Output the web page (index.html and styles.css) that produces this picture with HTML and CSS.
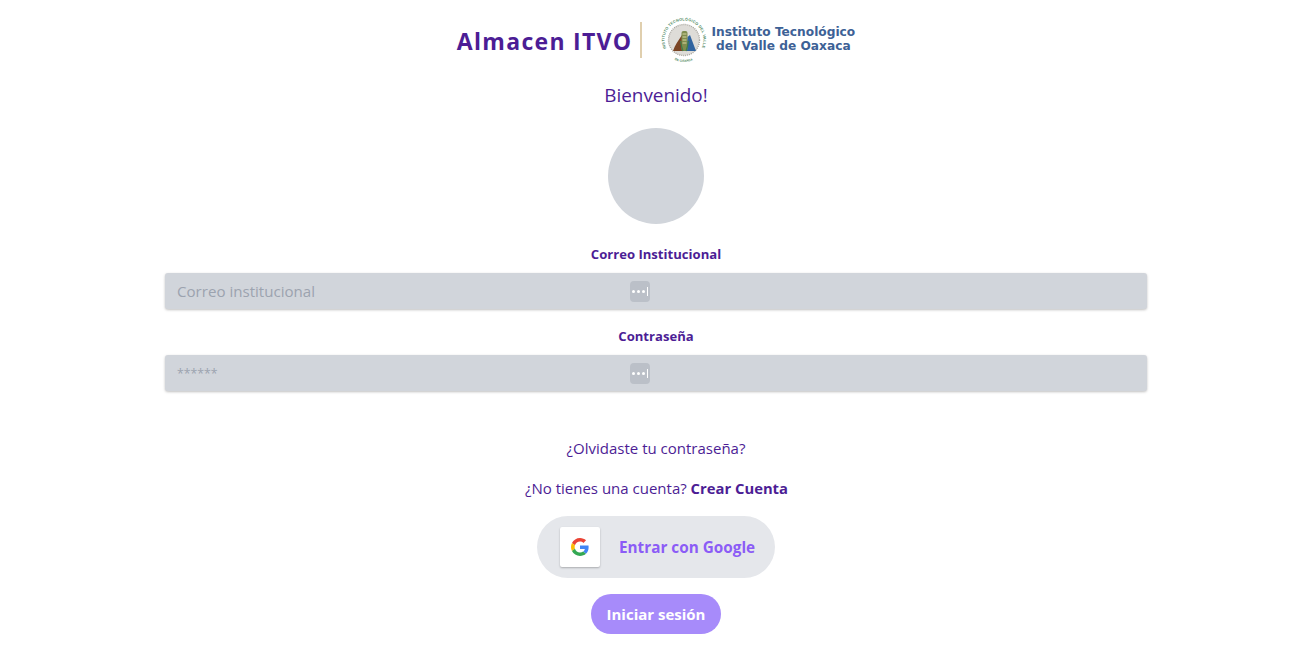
FILE: index.html
```html
<!DOCTYPE html>
<html lang="es">
<head>
<meta charset="utf-8">
<title>Almacen ITVO</title>
<link rel="stylesheet" href="styles.css">
</head>
<body>
<main class="page">
  <header class="brand">
    <h1 class="brand-title">Almacen ITVO</h1>
    <span class="brand-divider"></span>
    <svg class="crest" width="48" height="48" viewBox="0 0 48 48" aria-hidden="true">
      <defs>
        <path id="crest-top" d="M6.3 32.2 A19.5 19.5 0 1 1 41.7 32.2"/>
        <path id="crest-bottom" d="M14.5 43.8 A22 22 0 0 0 33.5 43.8"/>
      </defs>
      <circle cx="24" cy="24" r="23.5" fill="#fff"/>
      <circle cx="24" cy="24" r="15.5" fill="#dedcd8" stroke="#a9a69f" stroke-width="1.4" stroke-dasharray="1 1"/>
      <text class="crest-text"><textPath href="#crest-top" textLength="77">INSTITUTO TECNOLÓGICO DEL VALLE</textPath></text>
      <text class="crest-text crest-text-small"><textPath href="#crest-bottom" textLength="19">DE OAXACA</textPath></text>
      <path d="M13 35 C15 29 18 25 22 19 L23.5 35 Z" fill="#7a4424"/>
      <path d="M26 35 L27.5 21 L30 19 L36 35 Z" fill="#2f639f"/>
      <rect x="21.5" y="15" width="6" height="20" rx="2" fill="#7f8c4e"/>
      <path d="M22.5 18 H26.5 M22.5 21 H26.5 M22.5 24 H26.5 M22.5 27 H26.5" stroke="#d9d6a0" stroke-width="1"/>
      <path d="M23 35 C21.5 31 21 28 20.5 25 M26 35 C27.5 31 28 28 28.5 25" stroke="#3f7d49" stroke-width="1.2" fill="none"/>
    </svg>
    <p class="brand-school">Instituto Tecnológico<br>del Valle de Oaxaca</p>
  </header>

  <h2 class="welcome">Bienvenido!</h2>
  <div class="avatar"></div>

  <form class="login">
    <label class="field-label" for="correo">Correo Institucional</label>
    <div class="field">
      <input class="field-input" id="correo" type="text" placeholder="Correo institucional">
      <span class="key-icon"><i></i><i></i><i></i><b></b></span>
    </div>
    <label class="field-label" for="clave">Contraseña</label>
    <div class="field">
      <input class="field-input field-pass" id="clave" type="text" placeholder="******">
      <span class="key-icon"><i></i><i></i><i></i><b></b></span>
    </div>
  </form>

  <p class="forgot">¿Olvidaste tu contraseña?</p>
  <p class="signup">¿No tienes una cuenta? <strong>Crear Cuenta</strong></p>

  <button class="google" type="button">
    <span class="google-tile">
      <svg width="18" height="18" viewBox="0 0 48 48" aria-hidden="true">
        <path fill="#EA4335" d="M24 9.5c3.54 0 6.71 1.22 9.21 3.6l6.85-6.85C35.9 2.38 30.47 0 24 0 14.62 0 6.51 5.38 2.56 13.22l7.98 6.19C12.43 13.72 17.74 9.5 24 9.5z"/>
        <path fill="#4285F4" d="M46.98 24.55c0-1.57-.15-3.09-.38-4.55H24v9.02h12.94c-.58 2.96-2.26 5.48-4.78 7.18l7.73 6c4.51-4.18 7.09-10.36 7.09-17.65z"/>
        <path fill="#FBBC05" d="M10.53 28.59c-.48-1.45-.76-2.99-.76-4.59s.27-3.14.76-4.59l-7.98-6.19C.92 16.46 0 20.12 0 24c0 3.88.92 7.54 2.56 10.78l7.97-6.19z"/>
        <path fill="#34A853" d="M24 48c6.48 0 11.93-2.13 15.89-5.81l-7.73-6c-2.15 1.45-4.92 2.3-8.16 2.3-6.26 0-11.57-4.22-13.47-9.91l-7.98 6.19C6.51 42.62 14.62 48 24 48z"/>
      </svg>
    </span>
    <span class="google-text">Entrar con Google</span>
  </button>

  <button class="submit" type="button">Iniciar sesión</button>
</main>
</body>
</html>
```

FILE: styles.css
```css
* { box-sizing: border-box; }
html, body { margin: 0; padding: 0; }
body {
  background: #fff;
  color: #4c1d95;
  font-family: "Open Sans", "Noto Sans", sans-serif;
}
.page {
  display: flex;
  flex-direction: column;
  align-items: center;
  width: 100%;
  height: 666px;
  overflow: hidden;
  padding: 16px 0 0 15px;
}
.brand {
  display: flex;
  align-items: center;
  height: 48px;
}
.brand-title {
  margin: 2px 8px 0 0;
  font-size: 23px;
  line-height: 32px;
  font-weight: 700;
  letter-spacing: 1.3px;
  color: #4c1d95;
}
.brand-divider {
  width: 2px;
  height: 36px;
  background: #e0cfae;
  margin-right: 18px;
}
.crest { display: block; flex: none; }
.crest-text {
  font-family: "Liberation Sans", sans-serif;
  font-size: 3.8px;
  font-weight: 700;
  fill: #4f8a63;
}
.crest-text-small { font-size: 3.2px; }
.brand-school {
  margin: -2px 0 0 3px;
  font-family: "DejaVu Sans", sans-serif;
  font-size: 12.2px;
  line-height: 14px;
  font-weight: 700;
  text-align: center;
  color: #3d6196;
}
.welcome {
  margin: 17px 0 0;
  font-size: 18.9px;
  line-height: 28px;
  font-weight: 400;
  color: #4c1d95;
}
.avatar {
  width: 96px;
  height: 96px;
  border-radius: 50%;
  background: #d1d5db;
  margin-top: 19px;
}
.login {
  width: 982px;
  margin-top: 20px;
  display: flex;
  flex-direction: column;
  align-items: center;
}
.field-label {
  display: block;
  font-size: 13.1px;
  line-height: 20px;
  font-weight: 700;
  color: #4c1d95;
}
.field {
  position: relative;
  width: 100%;
  height: 36px;
  margin: 9px 0 17px;
}
.field-input {
  display: block;
  width: 100%;
  height: 36px;
  padding: 0 12px;
  border: 0;
  border-radius: 3px;
  background: #d1d5db;
  box-shadow: 0 1px 3px 0 rgba(0,0,0,.2), 0 1px 2px 0 rgba(0,0,0,.06);
  font: 400 15.1px/24px "Open Sans", sans-serif;
  color: #374151;
}
.field-pass { font-size: 12.3px; }
.field-input::placeholder { color: #9ca3af; opacity: 1; }
.key-icon {
  position: absolute;
  left: 465px;
  top: 8px;
  width: 20px;
  height: 21px;
  border-radius: 4px;
  background: #bbc0c8;
  display: flex;
  align-items: center;
  justify-content: center;
  gap: 2px;
}
.key-icon i {
  width: 3px;
  height: 3px;
  border-radius: 50%;
  background: #fff;
}
.key-icon b {
  width: 1px;
  height: 9px;
  background: #fff;
}
.forgot {
  margin: 28px 0 0;
  font-size: 15px;
  line-height: 24px;
}
.signup {
  margin: 16px 0 0 1px;
  font-size: 15px;
  line-height: 24px;
}
.signup strong { font-size: 14.8px; font-weight: 700; }
.google {
  display: flex;
  align-items: center;
  width: 238px;
  height: 62px;
  margin-top: 16px;
  padding: 0 0 0 23px;
  border: 0;
  border-radius: 31px;
  background: #e5e7eb;
  font-family: inherit;
}
.google-tile {
  display: flex;
  align-items: center;
  justify-content: center;
  width: 40px;
  height: 40px;
  background: #fff;
  border-radius: 2px;
  box-shadow: 0 1px 2px rgba(0,0,0,.25);
}
.google-text {
  margin-left: 19px;
  font-size: 15.3px;
  font-weight: 700;
  color: #8b5cf6;
  white-space: nowrap;
}
.submit {
  width: 130px;
  height: 40px;
  margin-top: 16px;
  border: 0;
  border-radius: 20px;
  background: #a78bfa;
  color: #fff;
  font: 700 15px/24px "Open Sans", sans-serif;
}
```
